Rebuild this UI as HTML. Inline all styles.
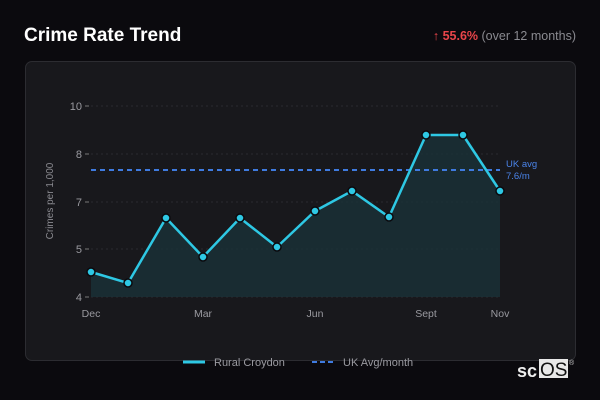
<!DOCTYPE html>
<html><head><meta charset="utf-8"><style>
body{margin:0;width:600px;height:400px;background:#0b0a0e;font-family:"Liberation Sans","DejaVu Sans",sans-serif;overflow:hidden;position:relative}
.t{position:absolute;left:24px;top:25px;color:#fff;font-weight:bold;font-size:19px}
.r{position:absolute;right:24px;top:29px;font-size:12.5px;color:#8a8a90}
.r b{color:#e8454a}
.card{position:absolute;left:25px;top:61px;width:549px;height:298px;background:#18181c;border:1px solid #2c2c31;border-radius:7px}
svg{position:absolute;left:0;top:0}
</style></head><body>
<div class="t">Crime Rate Trend</div>
<div class="r"><b>↑ 55.6%</b> (over 12 months)</div>
<div class="card"></div>
<svg width="600" height="400" font-family="Liberation Sans,DejaVu Sans,sans-serif">
<g stroke="#2a2a2f" stroke-dasharray="2 3" stroke-width="1">
<line x1="91" x2="500" y1="106" y2="106"/><line x1="91" x2="500" y1="154" y2="154"/>
<line x1="91" x2="500" y1="202" y2="202"/><line x1="91" x2="500" y1="249" y2="249"/>
<line x1="91" x2="500" y1="297" y2="297"/></g>
<g stroke="#777" stroke-width="1"><line x1="85" x2="89" y1="106" y2="106"/><line x1="85" x2="89" y1="154" y2="154"/><line x1="85" x2="89" y1="202" y2="202"/><line x1="85" x2="89" y1="249" y2="249"/><line x1="85" x2="89" y1="297" y2="297"/></g>
<g fill="#9a9aa0" font-size="11" text-anchor="end"><text x="82" y="110">10</text><text x="82" y="158">8</text><text x="82" y="206">7</text><text x="82" y="253">5</text><text x="82" y="301">4</text></g>
<text transform="translate(53,201) rotate(-90)" fill="#8a8a90" font-size="10" text-anchor="middle">Crimes per 1,000</text>
<g fill="#9a9aa0" font-size="10.5" text-anchor="middle"><text x="91" y="317">Dec</text><text x="203" y="317">Mar</text><text x="315" y="317">Jun</text><text x="426" y="317">Sept</text><text x="500" y="317">Nov</text></g>
<polygon fill="#1a3238" opacity="0.8" points="91,272 128,283 166,218 203,257 240,218 277,247 315,211 352,191 389,217 426,135 463,135 500,191 500,297 91,297"/>
<line x1="91" x2="500" y1="170" y2="170" stroke="#3f7be0" stroke-width="2" stroke-dasharray="5 4"/>
<text x="506" y="167" fill="#4a83e8" font-size="9.5">UK avg</text><text x="506" y="179" fill="#4a83e8" font-size="9.5">7.6/m</text>
<polyline fill="none" stroke="#2ec8e4" stroke-width="2.5" stroke-linejoin="round" points="91,272 128,283 166,218 203,257 240,218 277,247 315,211 352,191 389,217 426,135 463,135 500,191"/>
<g fill="#2ec8e4" stroke="#0b0a0e" stroke-width="1.5"><circle cx="91" cy="272" r="4"/><circle cx="128" cy="283" r="4"/><circle cx="166" cy="218" r="4"/><circle cx="203" cy="257" r="4"/><circle cx="240" cy="218" r="4"/><circle cx="277" cy="247" r="4"/><circle cx="315" cy="211" r="4"/><circle cx="352" cy="191" r="4"/><circle cx="389" cy="217" r="4"/><circle cx="426" cy="135" r="4"/><circle cx="463" cy="135" r="4"/><circle cx="500" cy="191" r="4"/></g>
<line x1="183" x2="205" y1="362" y2="362" stroke="#2ec8e4" stroke-width="3"/>
<text x="214" y="366" fill="#9a9aa0" font-size="11">Rural Croydon</text>
<line x1="312" x2="336" y1="362" y2="362" stroke="#3f7be0" stroke-width="2" stroke-dasharray="5 3"/>
<text x="343" y="366" fill="#9a9aa0" font-size="11">UK Avg/month</text>
<text x="517" y="377" fill="#eee" font-size="18" font-weight="bold">sc</text>
<rect x="539" y="359" width="29" height="19" fill="#e8e8e8"/>
<text x="540" y="376" fill="#111" font-size="19">OS</text>
<text x="569" y="365" fill="#ccc" font-size="7">®</text>
</svg>
</body></html>
